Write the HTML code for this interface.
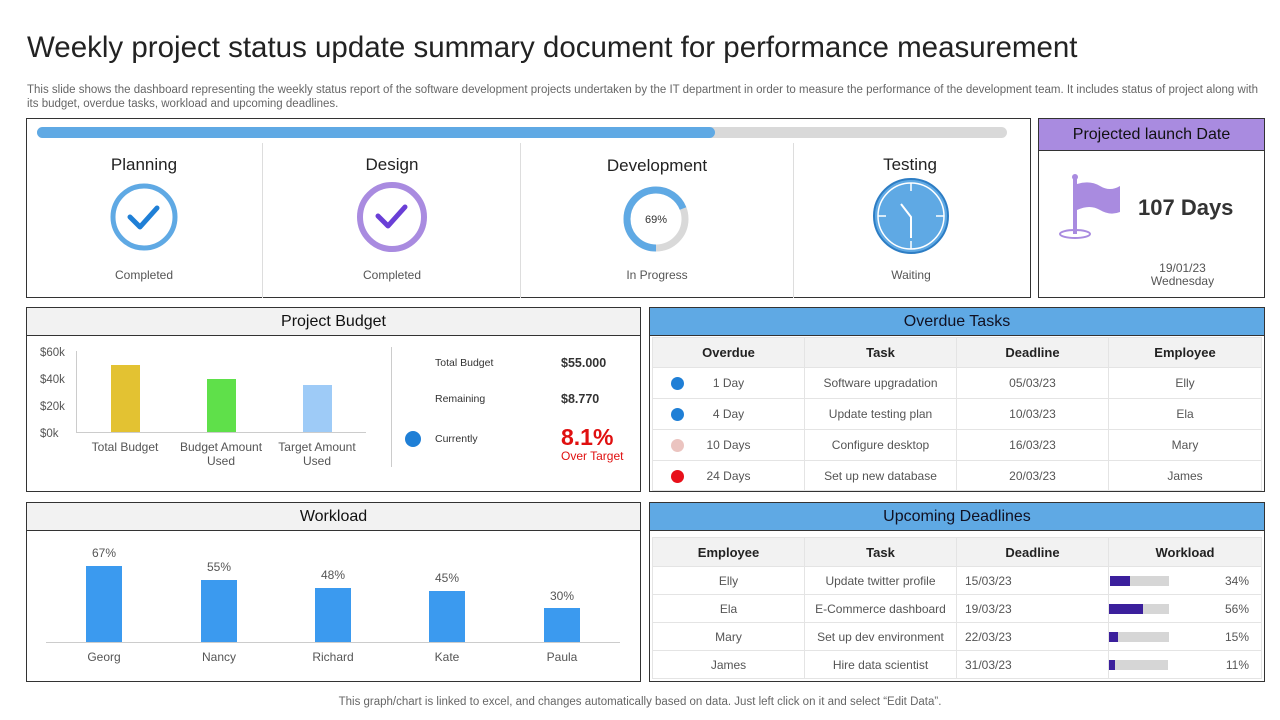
<!DOCTYPE html><html><head><meta charset="utf-8"><style>
*{margin:0;padding:0;box-sizing:border-box}
body{width:1280px;height:720px;background:#fff;font-family:"Liberation Sans",sans-serif;position:relative;overflow:hidden;color:#222}
.a{position:absolute}
.box{position:absolute;border:1px solid #333}
.hd{position:absolute;left:0;right:0;top:0;height:28px;border-bottom:1px solid #333;text-align:center;font-size:16px;line-height:27px;color:#111}
.c{text-align:center}
.g{color:#555;font-size:12px}
table{border-collapse:collapse;position:absolute;font-size:12px;color:#555;table-layout:fixed}
td{border:1px solid #e4e4e4;text-align:center}
th{background:#f2f2f2;font-size:13px;color:#222;border:1px solid #e4e4e4}
.dot{display:inline-block;width:13px;height:13px;border-radius:50%;position:absolute;left:18px;top:9px}
</style></head><body>
<div class="a" style="left:27px;top:31px;font-size:29.5px;color:#222;white-space:nowrap">Weekly project status update summary document for performance measurement</div>
<div class="a" style="left:27px;top:83px;width:1232px;font-size:11.5px;line-height:14px;color:#666">This slide shows the dashboard representing the weekly status report of the software development projects undertaken by the IT department in order to measure the performance of the development team. It includes status of project along with its budget, overdue tasks, workload and upcoming deadlines.</div>

<div class="box" style="left:26px;top:118px;width:1005px;height:180px"></div>
<div class="a" style="left:37px;top:127px;width:970px;height:11px;border-radius:6px;background:#d9d9d9"></div>
<div class="a" style="left:37px;top:127px;width:678px;height:11px;border-radius:6px;background:#5fa9e4"></div>
<div class="a" style="left:262px;top:143px;width:1px;height:155px;background:#ddd"></div>
<div class="a" style="left:520px;top:143px;width:1px;height:155px;background:#ddd"></div>
<div class="a" style="left:793px;top:143px;width:1px;height:155px;background:#ddd"></div>
<div class="a c" style="left:64px;width:160px;top:155px;font-size:17px">Planning</div>
<div class="a c" style="left:312px;width:160px;top:155px;font-size:17px">Design</div>
<div class="a c" style="left:577px;width:160px;top:156px;font-size:17px">Development</div>
<div class="a c" style="left:830px;width:160px;top:155px;font-size:17px">Testing</div>
<svg class="a" style="left:0;top:0" width="1040" height="300">
<circle cx="144" cy="217" r="31" fill="none" stroke="#5fa9e4" stroke-width="5"/>
<path d="M130 217 L140 227 L157 208" fill="none" stroke="#1f7fd6" stroke-width="5" stroke-linecap="round" stroke-linejoin="round"/>
<circle cx="392" cy="217" r="32" fill="none" stroke="#a98be0" stroke-width="6"/>
<path d="M378 216 L388 226 L405 207" fill="none" stroke="#6a3fd6" stroke-width="5" stroke-linecap="round" stroke-linejoin="round"/>
<circle cx="656" cy="219" r="29" fill="none" stroke="#d9d9d9" stroke-width="7"/>
<circle cx="656" cy="219" r="29" fill="none" stroke="#5fa9e4" stroke-width="7" stroke-dasharray="125.7 182.2" transform="rotate(90 656 219)"/>
<text x="656" y="223" font-size="11" text-anchor="middle" fill="#333" font-family="Liberation Sans">69%</text>
<circle cx="911" cy="216" r="37" fill="#5fa9e4" stroke="#2d7dc4" stroke-width="2"/>
<circle cx="911" cy="216" r="33" fill="none" stroke="#fff" stroke-width="1.5"/>
<path d="M911 183v8M911 241v8M878 216h8M936 216h8" stroke="#fff" stroke-width="1.5"/>
<path d="M901 204 L911 217 L911 238" fill="none" stroke="#fff" stroke-width="2"/>
</svg>
<div class="a c g" style="left:64px;width:160px;top:268px">Completed</div>
<div class="a c g" style="left:312px;width:160px;top:268px">Completed</div>
<div class="a c g" style="left:577px;width:160px;top:268px">In Progress</div>
<div class="a c g" style="left:831px;width:160px;top:268px">Waiting</div>

<div class="box" style="left:1038px;top:118px;width:227px;height:180px"><div class="hd" style="height:32px;line-height:31px;background:#a98be0;font-size:16px">Projected launch Date</div></div>
<svg class="a" style="left:1050px;top:170px" width="80" height="72">
<ellipse cx="25" cy="64" rx="15" ry="4" fill="none" stroke="#a98be0" stroke-width="2"/>
<rect x="23" y="8" width="4" height="56" fill="#a98be0"/><circle cx="25" cy="7" r="3" fill="#a98be0"/>
<path d="M27 14 Q40 10 50 16 T70 16 V42 Q60 46 50 40 T27 40Z" fill="#a98be0"/>
</svg>
<div class="a" style="left:1138px;top:195px;font-size:22px;font-weight:bold;color:#333">107 Days</div>
<div class="a c g" style="left:1120px;width:125px;top:262px;font-size:12px;line-height:13px">19/01/23<br>Wednesday</div>

<div class="box" style="left:26px;top:307px;width:615px;height:185px"><div class="hd" style="background:#f2f2f2">Project Budget</div></div>
<div class="a g" style="left:40px;top:340px;font-size:11.5px;line-height:27px">$60k<br>$40k<br>$20k<br>$0k</div>
<div class="a" style="left:76px;top:351px;width:1px;height:82px;background:#ccc"></div>
<div class="a" style="left:76px;top:432px;width:290px;height:1px;background:#ccc"></div>
<div class="a" style="left:111px;top:365px;width:29px;height:67px;background:#e3c232"></div>
<div class="a" style="left:207px;top:379px;width:29px;height:53px;background:#5fe04a"></div>
<div class="a" style="left:303px;top:385px;width:29px;height:47px;background:#9ecbf7"></div>
<div class="a c g" style="left:80px;width:90px;top:440px;line-height:14px">Total Budget</div>
<div class="a c g" style="left:176px;width:90px;top:440px;line-height:14px">Budget Amount Used</div>
<div class="a c g" style="left:272px;width:90px;top:440px;line-height:14px">Target Amount Used</div>
<div class="a" style="left:391px;top:347px;width:1px;height:120px;background:#ccc"></div>
<div class="a" style="left:435px;top:357px;font-size:10.5px;color:#333">Total Budget</div>
<div class="a" style="left:561px;top:356px;font-size:12.5px;font-weight:bold;color:#333">$55.000</div>
<div class="a" style="left:435px;top:393px;font-size:10.5px;color:#333">Remaining</div>
<div class="a" style="left:561px;top:392px;font-size:12.5px;font-weight:bold;color:#333">$8.770</div>
<div class="a" style="left:405px;top:431px;width:16px;height:16px;border-radius:50%;background:#1f7fd6"></div>
<div class="a" style="left:435px;top:433px;font-size:10.5px;color:#333">Currently</div>
<div class="a" style="left:561px;top:424px;font-size:23px;font-weight:bold;color:#e01010">8.1%</div>
<div class="a" style="left:561px;top:449px;font-size:12px;color:#e01010">Over Target</div>

<div class="box" style="left:649px;top:307px;width:616px;height:185px"><div class="hd" style="background:#5fa9e4;color:#112">Overdue Tasks</div></div>
<table style="left:652px;top:337px;width:610px">
<colgroup><col style="width:152px"><col style="width:152px"><col style="width:152px"><col></colgroup>
<tr style="height:30px"><th>Overdue</th><th>Task</th><th>Deadline</th><th>Employee</th></tr>
<tr style="height:31px"><td style="position:relative"><span class="dot" style="background:#1f7fd6"></span>1 Day</td><td>Software upgradation</td><td>05/03/23</td><td>Elly</td></tr>
<tr style="height:31px"><td style="position:relative"><span class="dot" style="background:#1f7fd6"></span>4 Day</td><td>Update testing plan</td><td>10/03/23</td><td>Ela</td></tr>
<tr style="height:31px"><td style="position:relative"><span class="dot" style="background:#ebc4c0"></span>10 Days</td><td>Configure desktop</td><td>16/03/23</td><td>Mary</td></tr>
<tr style="height:30px"><td style="position:relative"><span class="dot" style="background:#e8101a"></span>24 Days</td><td>Set up new database</td><td>20/03/23</td><td>James</td></tr>
</table>

<div class="box" style="left:26px;top:502px;width:615px;height:180px"><div class="hd" style="background:#f2f2f2">Workload</div></div>
<div class="a" style="left:46px;top:642px;width:574px;height:1px;background:#ccc"></div>
<div class="a" style="left:86px;top:566px;width:36px;height:76px;background:#3b9aef"></div>
<div class="a" style="left:201px;top:580px;width:36px;height:62px;background:#3b9aef"></div>
<div class="a" style="left:315px;top:588px;width:36px;height:54px;background:#3b9aef"></div>
<div class="a" style="left:429px;top:591px;width:36px;height:51px;background:#3b9aef"></div>
<div class="a" style="left:544px;top:608px;width:36px;height:34px;background:#3b9aef"></div>
<div class="a c g" style="left:74px;width:60px;top:546px">67%</div>
<div class="a c g" style="left:189px;width:60px;top:560px">55%</div>
<div class="a c g" style="left:303px;width:60px;top:568px">48%</div>
<div class="a c g" style="left:417px;width:60px;top:571px">45%</div>
<div class="a c g" style="left:532px;width:60px;top:589px">30%</div>
<div class="a c g" style="left:74px;width:60px;top:650px">Georg</div>
<div class="a c g" style="left:189px;width:60px;top:650px">Nancy</div>
<div class="a c g" style="left:303px;width:60px;top:650px">Richard</div>
<div class="a c g" style="left:417px;width:60px;top:650px">Kate</div>
<div class="a c g" style="left:532px;width:60px;top:650px">Paula</div>

<div class="box" style="left:649px;top:502px;width:616px;height:180px"><div class="hd" style="background:#5fa9e4;color:#112">Upcoming Deadlines</div></div>
<table style="left:652px;top:537px;width:610px">
<colgroup><col style="width:152px"><col style="width:152px"><col style="width:152px"><col></colgroup>
<tr style="height:29px"><th>Employee</th><th>Task</th><th>Deadline</th><th>Workload</th></tr>
<tr style="height:28px"><td>Elly</td><td>Update twitter profile</td><td style="text-align:left;padding-left:8px">15/03/23</td><td style="position:relative"><span class="a" style="left:1px;top:9px;width:59px;height:10px;background:#d6d6d6"></span><span class="a" style="left:1px;top:9px;width:20px;height:10px;background:#3b1f9c"></span><span style="float:right;padding-right:12px">34%</span></td></tr>
<tr style="height:28px"><td>Ela</td><td>E-Commerce dashboard</td><td style="text-align:left;padding-left:8px">19/03/23</td><td style="position:relative"><span class="a" style="left:1px;top:9px;width:59px;height:10px;background:#d6d6d6"></span><span class="a" style="left:0;top:9px;width:34px;height:10px;background:#3b1f9c"></span><span style="float:right;padding-right:12px">56%</span></td></tr>
<tr style="height:28px"><td>Mary</td><td>Set up dev environment</td><td style="text-align:left;padding-left:8px">22/03/23</td><td style="position:relative"><span class="a" style="left:1px;top:9px;width:59px;height:10px;background:#d6d6d6"></span><span class="a" style="left:0;top:9px;width:9px;height:10px;background:#3b1f9c"></span><span style="float:right;padding-right:12px">15%</span></td></tr>
<tr style="height:28px"><td>James</td><td>Hire data scientist</td><td style="text-align:left;padding-left:8px">31/03/23</td><td style="position:relative"><span class="a" style="left:1px;top:9px;width:58px;height:10px;background:#d6d6d6"></span><span class="a" style="left:0;top:9px;width:6px;height:10px;background:#3b1f9c"></span><span style="float:right;padding-right:12px">11%</span></td></tr>
</table>

<div class="a c" style="left:0;width:1280px;top:696px;font-size:11.5px;color:#666">This graph/chart is linked to excel, and changes automatically based on data. Just left click on it and select “Edit Data”.</div>
</body></html>
